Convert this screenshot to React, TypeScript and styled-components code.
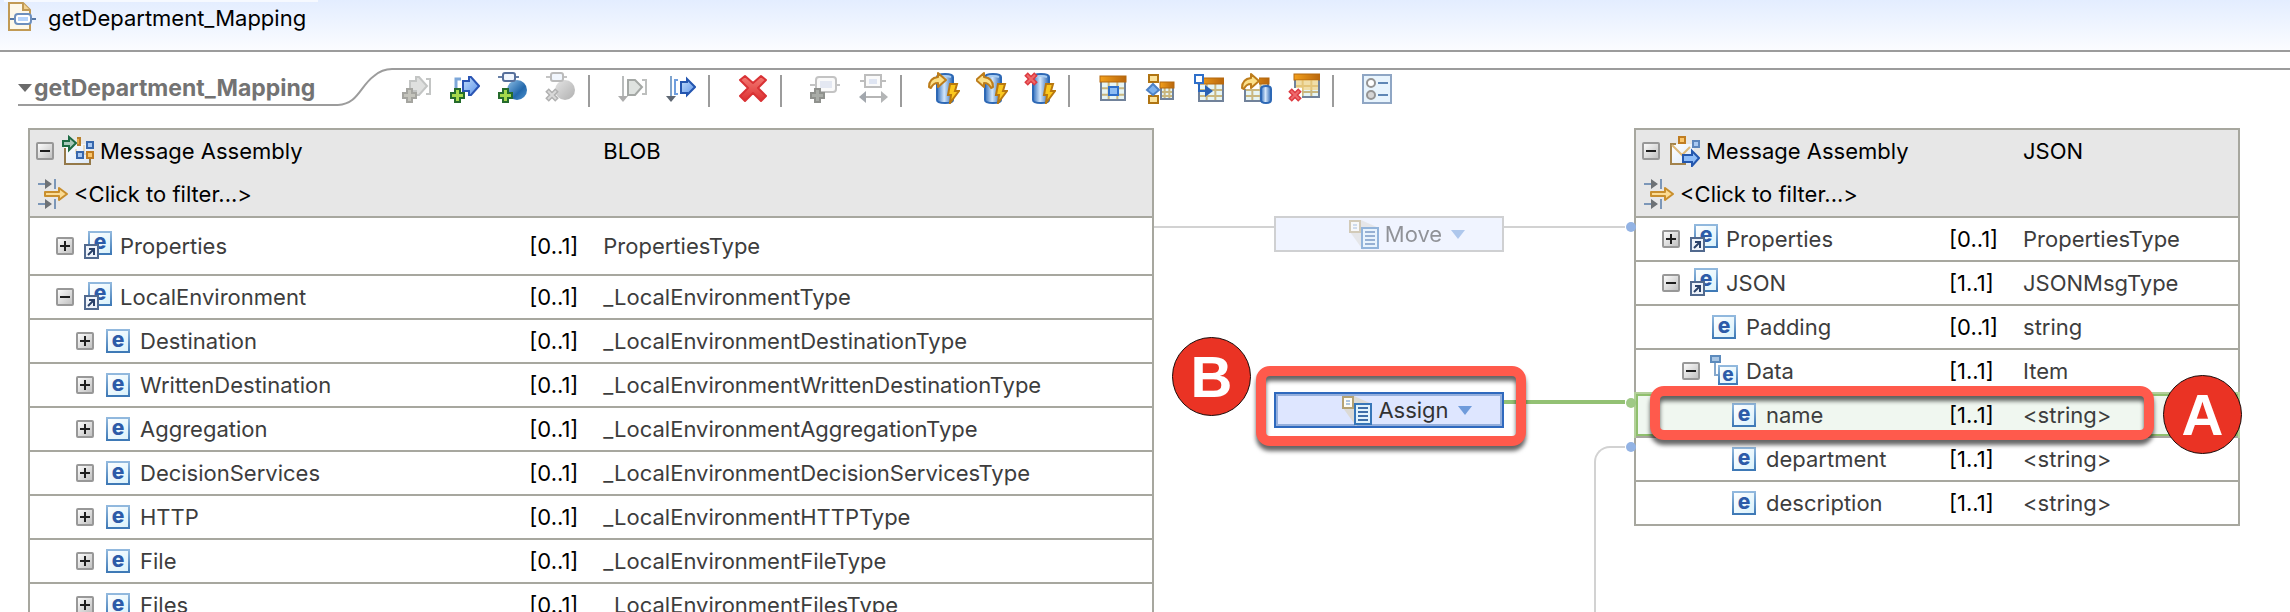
import React from "react";
import styled, { createGlobalStyle } from "styled-components";

const GlobalStyle = createGlobalStyle`
  *, *::before, *::after { box-sizing: border-box; }
  body {
    margin: 0;
    background: #ffffff;
    color: #000000;
    font-family: Inter, "Liberation Sans", sans-serif;
    font-size: 22px;
    line-height: 28px;
  }
  button {
    margin: 0;
    padding: 0;
    border: 0;
    background: none;
    font: inherit;
    color: inherit;
  }
`;

const line = "#a7a79f";

const Editor = styled.div`
  display: flex;
  flex-direction: column;
  height: 100vh;
  overflow: hidden;
`;

const TitleBar = styled.header`
  flex: none;
  padding: 0 4px;
  height: 52px;
  border-bottom: 2px solid #9c9c9c;
  background: linear-gradient(#e3edff, #fbfcff);
`;

const TitleTab = styled.h1`
  display: flex;
  align-items: center;
  gap: 12px;
  width: 314px;
  height: 34px;
  margin: 0;
  border-top: 2px solid #f6f9ff;
  font-size: 22px;
  font-weight: 400;
  white-space: nowrap;
`;

const Section = styled.div`
  display: flex;
  flex: none;
  height: 38px;
  margin: 16px 0 22px 18px;
`;

const SectionTitle = styled.button`
  display: flex;
  align-items: center;
  gap: 2px;
  width: 320px;
  padding-top: 4px;
  border-bottom: 2px solid #9c9c9c;
  color: #737373;
  font-size: 23px;
  font-weight: 700;
  white-space: nowrap;
`;

const Toolbar = styled.div`
  display: flex;
  flex: 1;
  align-items: flex-start;
  border-top: 2px solid #9c9c9c;
`;

const ToolButton = styled.button`
  display: flex;
  justify-content: center;
  width: 48px;
  padding-top: 2px;
`;

const ToolSeparator = styled.span`
  width: 2px;
  height: 32px;
  margin: 5px 18px 0 4px;
  background: #9c9c9c;
`;

const Canvas = styled.main`
  display: grid;
  flex: 1;
  grid-template-columns: 1126fr 480fr 606fr;
  align-items: start;
  min-height: 0;
  padding: 0 50px 0 28px;
`;

const Tree = styled.table`
  width: 100%;
  border: 2px solid ${line};
  border-spacing: 0;
  table-layout: fixed;
  text-align: left;
  white-space: nowrap;

  th, td { padding: 0 0 1px; font-weight: 400; }
  thead { background: #e7e7e7; }
  th { height: 43px; padding-bottom: 2px; }
`;

const NameCol = styled.col<{ $width: string }>`
  width: ${(p) => p.$width};
`;

const CardinalityCol = styled.col`
  width: 74px;
`;

const TreeRow = styled.tr<{ $tall?: boolean; $mapped?: boolean }>`
  position: relative;
  background: ${(p) => (p.$mapped ? "#f0f7f0" : "#ffffff")};

  td {
    height: ${(p) => (p.$tall ? 58 : 44)}px;
    border-top: 2px solid ${line};
    color: #3d3d3d;
  }
  td:nth-child(2) { color: #000000; }
`;

const RowName = styled.div<{ $level: number }>`
  display: flex;
  align-items: center;
  padding-left: ${(p) => 6 + p.$level * 20}px;
`;

const Label = styled.span`
  margin-left: 6px;
`;

const Toggle = styled.button`
  display: flex;
  width: 18px;
  height: 18px;
  margin-right: 8px;
`;

const ToggleSpace = styled.span`
  width: 26px;
`;

const FilterButton = styled.button`
  display: flex;
  align-items: center;
  margin-left: 6px;
`;

const MappedFrame = styled.span`
  position: absolute;
  inset: 0 -2px -2px;
  border: 2px solid #b4d09b;
  box-shadow: inset 0 0 0 2px #90c06e;
`;

const Callout = styled.span`
  position: absolute;
  z-index: 2;
  border: 10px solid #ff5a4c;
  border-radius: 14px;
  filter: drop-shadow(0 5px 2px rgba(0, 0, 0, 0.6));
  pointer-events: none;
`;

const NameCallout = styled(Callout)`
  inset: -6px 84px -4px 14px;
`;

const AssignCallout = styled(Callout)`
  inset: -26px -22px -18px -18px;
`;

const Badge = styled.span`
  position: absolute;
  z-index: 3;
  display: flex;
  align-items: center;
  justify-content: center;
  width: 79px;
  height: 79px;
  border: 1px solid #1a0a08;
  border-radius: 50%;
  background: #ea3324;
  color: #ffffff;
  font-family: "Liberation Sans", sans-serif;
  font-size: 58px;
  font-weight: 700;
`;

const NameBadge = styled(Badge)`
  top: -17px;
  right: -4px;
`;

const AssignBadge = styled(Badge)`
  top: -55px;
  left: -102px;
`;

const Mappings = styled.section`
  display: flex;
  flex-direction: column;
  align-self: stretch;
  padding-top: 88px;
`;

const MappingList = styled.div`
  display: flex;
  flex: none;
  flex-direction: column;
  gap: 140px;
`;

const MappingRow = styled.div`
  display: flex;
  height: 36px;
`;

const Wire = styled.span<{ $grow: number; $kind?: "active" | "none" }>`
  flex: ${(p) => p.$grow} 1 0;
  height: ${(p) => (p.$kind === "active" ? 4 : 2)}px;
  margin-top: ${(p) => (p.$kind === "active" ? 8 : 10)}px;
  background: ${(p) =>
    p.$kind === "active" ? "#93c174" : p.$kind === "none" ? "transparent" : "#d2d2d2"};
`;

const Port = styled.span<{ $active?: boolean }>`
  position: relative;
  z-index: 1;
  flex: none;
  width: 10px;
  height: 10px;
  margin: 6px -2px 0 1px;
  border-radius: 50%;
  background: ${(p) => (p.$active ? "#9fc986" : "#93b3e4")};
`;

const TransformNode = styled.div`
  position: relative;
  flex: 230 1 0;
  display: flex;
`;

const TransformButton = styled.button<{ $selected?: boolean }>`
  display: flex;
  flex: 1;
  align-items: center;
  justify-content: center;
  padding-left: 34px;
  border: 2px solid ${(p) => (p.$selected ? "#2f69be" : "#cfd0d2")};
  box-shadow: ${(p) => (p.$selected ? "inset 0 0 0 2px #95afdc" : "none")};
  background: ${(p) => (p.$selected ? "#dee6ff" : "#f0f4ff")};
  color: #333333;

  > * { opacity: ${(p) => (p.$selected ? 1 : 0.5)}; }
  > svg:last-child { margin-left: 9px; }
`;

const ElbowRow = styled.div`
  display: flex;
  flex: 1;
  justify-content: flex-end;
  margin-top: 12px;
`;

const Elbow = styled.span`
  width: 31px;
  margin-top: 6px;
  border: solid #d2d2d2;
  border-width: 2px 0 0 2px;
  border-top-left-radius: 16px;
`;

const ElbowPort = styled(Port)`
  margin-top: 2px;
`;

/* ---------- icons, all on a 32 × 32 grid ---------- */

const Svg = ({ children }: { children: React.ReactNode }) => (
  <svg width="32" height="32" viewBox="0 0 32 32" fill="none" aria-hidden="true">
    {children}
  </svg>
);

const DefsSvg = styled.svg`
  position: absolute;
`;

const Defs = () => (
  <DefsSvg width="0" height="0" aria-hidden="true">
    <defs>
      <linearGradient id="cyl" x1="0" x2="1" y1="0" y2="0">
        <stop offset="0" stopColor="#2f6dbd" />
        <stop offset="0.45" stopColor="#d3e6fa" />
        <stop offset="1" stopColor="#2a66b4" />
      </linearGradient>
      <linearGradient id="blue" x1="0" x2="1" y1="0" y2="1">
        <stop offset="0" stopColor="#c4defa" />
        <stop offset="1" stopColor="#5b93ea" />
      </linearGradient>
      <linearGradient id="ball" x1="0" x2="1" y1="0" y2="1">
        <stop offset="0" stopColor="#8fc1e8" />
        <stop offset="0.6" stopColor="#2368ab" />
        <stop offset="1" stopColor="#4f93cf" />
      </linearGradient>
      <linearGradient id="greyBall" x1="0" x2="1" y1="0" y2="1">
        <stop offset="0" stopColor="#e4e4e4" />
        <stop offset="1" stopColor="#b0b0b0" />
      </linearGradient>
      <linearGradient id="red" x1="0" x2="0" y1="0" y2="1">
        <stop offset="0" stopColor="#f47d76" />
        <stop offset="1" stopColor="#dc2f30" />
      </linearGradient>
      <linearGradient id="head" x1="0" x2="1" y1="0" y2="0">
        <stop offset="0" stopColor="#f3a01c" />
        <stop offset="1" stopColor="#b8660c" />
      </linearGradient>
      <linearGradient id="elem" x1="0" x2="1" y1="0" y2="1">
        <stop offset="0" stopColor="#ffffff" />
        <stop offset="1" stopColor="#d9f1fb" />
      </linearGradient>
      <linearGradient id="elemEdge" x1="0" x2="0" y1="0" y2="1">
        <stop offset="0" stopColor="#92b9de" />
        <stop offset="1" stopColor="#3e79b6" />
      </linearGradient>
      <linearGradient id="tog" x1="0" x2="1" y1="0" y2="1">
        <stop offset="0" stopColor="#ffffff" />
        <stop offset="1" stopColor="#bdbdbd" />
      </linearGradient>
      <linearGradient id="page" x1="0" x2="1" y1="0" y2="1">
        <stop offset="0" stopColor="#ffffff" />
        <stop offset="1" stopColor="#dbe8f8" />
      </linearGradient>
    </defs>
  </DefsSvg>
);

const Plus = ({ grey }: { grey?: boolean }) => (
  <path
    d="M7 17h5v4h4v5h-4v4H7v-4H3v-5h4z"
    fill={grey ? "#c4c4bc" : "#a6d84c"}
    stroke={grey ? "#a5a5a0" : "#256b2c"}
    strokeWidth="2"
  />
);

const SmallCross = ({ y, grey, x = 0 }: { y: number; grey?: boolean; x?: number }) => (
  <g transform={`translate(${x} ${y})`}>
    <path d="M2 2l10 10M12 2l-10 10" stroke={grey ? "#b0b0b0" : "#dd3a40"} strokeWidth="5" />
    <path d="M3 3l8 8M11 3l-8 8" stroke={grey ? "#d9d9d9" : "#ee6a6c"} strokeWidth="2" />
  </g>
);

const AddTarget = ({ grey }: { grey?: boolean }) => (
  <Svg>
    {grey ? (
      <>
        <path d="M10 9h6V5h3l8 9-8 9h-3v-4h-6z" fill="#dfe0df" stroke="#c3c5c4" strokeWidth="2" />
        <path d="M26 7h4v15h-4" stroke="#c3c5c4" strokeWidth="2" />
      </>
    ) : (
      <>
        <path d="M13 7H8v13" stroke="#7da7d9" strokeWidth="3" />
        <path d="M15 9h6V5h2l8 9-8 9h-2v-4h-6z" fill="url(#blue)" stroke="#2b55b4" strokeWidth="2" />
      </>
    )}
    <Plus grey={grey} />
  </Svg>
);

const NodeBall = ({ grey }: { grey?: boolean }) => (
  <Svg>
    <circle cx="21" cy="18" r="10" fill={grey ? "url(#greyBall)" : "url(#ball)"} />
    <path d="M2 5h5M19 5h4" stroke={grey ? "#c4c4c4" : "#6880a6"} strokeWidth="2" />
    <rect x="7" y="1" width="12" height="8" rx="2" fill="#f1f6fd" stroke={grey ? "#bbbbbb" : "#566f9b"} strokeWidth="2" />
    {grey ? <SmallCross x={1} y={16} grey /> : <Plus />}
  </Svg>
);

const MoveDown = ({ grey }: { grey?: boolean }) => (
  <Svg>
    <path d="M7 4v21" stroke={grey ? "#b9bcbc" : "#7fa3cc"} strokeWidth="2" />
    <path d="M2 24h10l-5 6z" fill={grey ? "#adadad" : "#5f6772"} />
    {grey ? (
      <>
        <path d="M12 8h7l7 7-7 8h-7z" fill="#dfe3e0" stroke="#a4a8a5" strokeWidth="2" />
        <path d="M26 8h4v14h-4" stroke="#bdbfbe" strokeWidth="2" />
      </>
    ) : (
      <>
        <path d="M14 8h-3v14h3" stroke="#6f9ede" strokeWidth="2" />
        <path d="M17 10h6V7l8 8-8 8v-2h-6z" fill="url(#blue)" stroke="#2456b0" strokeWidth="2" />
      </>
    )}
  </Svg>
);

const DeleteIcon = () => (
  <Svg>
    <path
      d="M9 4l8 7 8-7 5 4-8 8 8 8-5 5-8-8-8 8-5-5 8-8-8-8z"
      fill="url(#red)"
      stroke="#d93235"
      strokeWidth="2"
      strokeLinejoin="round"
    />
  </Svg>
);

const AddNode = () => (
  <Svg>
    <rect x="8" y="5" width="20" height="15" rx="3" fill="#fafafa" stroke="#c3c3c3" strokeWidth="2" />
    <path d="M2 13h5M29 13h3" stroke="#c3c3c3" strokeWidth="2" />
    <path d="M12 9h12v7H12z" fill="#e4e8f2" />
    <path d="M7 17h5v4h4v5h-4v4H7v-4H3v-5h4z" fill="#a9aca7" stroke="#8f918d" strokeWidth="2" />
  </Svg>
);

const FitNode = () => (
  <Svg>
    <rect x="9" y="3" width="16" height="12" fill="#fafafa" stroke="#bdbdbd" strokeWidth="2" />
    <path d="M4 9h4M26 9h4" stroke="#bdbdbd" strokeWidth="2" />
    <path d="M13 7h8v5h-8z" fill="#dfe5f2" />
    <path d="M8 25h18" stroke="#b5b5b5" strokeWidth="2" />
    <path d="M3 25l7-6v12z" fill="#a2a7ad" />
    <path d="M32 25l-7-6v12z" fill="#b3b5b6" />
  </Svg>
);

const Cylinder = () => (
  <>
    <path d="M9 5q0-3 8-3t8 3v23q0 3-8 3t-8-3z" fill="url(#cyl)" stroke="#2d68b5" strokeWidth="2" />
    <path d="M11 5q6-2 12 0" stroke="#a8cdf2" strokeWidth="2" />
    <path d="M22 12h7l-2 7h4l-9 12 1-8h-3z" fill="#fbc81e" stroke="#b9780e" strokeWidth="2" />
  </>
);

const CurvedArrow = () => (
  <path
    d="M1 15q0-9 9-10V1l8 7-8 7v-4q-5 0-7 5z"
    fill="#fbe08a"
    stroke="#bd7d1b"
    strokeWidth="2"
    strokeLinejoin="round"
  />
);

const Database = ({ kind }: { kind: "in" | "out" | "delete" }) => (
  <Svg>
    <Cylinder />
    {kind === "in" && <CurvedArrow />}
    {kind === "out" && (
      <g transform="translate(18 0) scale(-1 1)">
        <CurvedArrow />
      </g>
    )}
    {kind === "delete" && <SmallCross y={0} />}
  </Svg>
);

const Grid = ({ x, y, w, h }: { x: number; y: number; w: number; h: number }) => {
  const cw = w / 3;
  const body = h - 6;
  const rh = body / 3;
  return (
    <g transform={`translate(${x} ${y})`}>
      <rect y="5" width={w} height={h - 5} fill="#e6f5f5" />
      <path
        d={`M0 ${6 + rh}h${w}M0 ${6 + rh * 2}h${w}M${cw} 6v${body}M${cw * 2} 6v${body}`}
        stroke="#c9b77f"
        strokeWidth="2"
      />
      <path d={`M1 6v${h - 7}h${w - 2}V6`} stroke="#71829a" strokeWidth="2" />
      <rect x="0" y="0" width={w} height="6" fill="url(#head)" stroke="#b4690f" />
    </g>
  );
};

const TableCell = () => (
  <Svg>
    <Grid x={4} y={4} w={26} h={25} />
    <rect x="13" y="15" width="9" height="8" fill="#8cbcf3" stroke="#2e6fca" strokeWidth="2" />
  </Svg>
);

const TableTree = () => (
  <Svg>
    <rect x="5" y="3" width="9" height="7" fill="#fbe29a" stroke="#b07412" strokeWidth="2" />
    <rect x="5" y="24" width="9" height="7" fill="#fbe29a" stroke="#b07412" strokeWidth="2" />
    <path d="M9 12l6 6-6 5-6-5z" fill="#7db1ee" stroke="#4c81c6" strokeWidth="2" />
    <Grid x={16} y={10} w={14} h={18} />
  </Svg>
);

const TableLink = () => (
  <Svg>
    <Grid x={6} y={6} w={26} h={24} />
    <rect x="3" y="3" width="8" height="8" fill="#ffffff" stroke="#2e6fca" strokeWidth="2" />
    <path d="M7 12v7h8" stroke="#2a67bf" strokeWidth="2" />
    <path d="M13 13l8 6-8 6z" fill="#2a62b4" />
  </Svg>
);

const TableStore = () => (
  <Svg>
    <Grid x={4} y={6} w={25} h={24} />
    <path d="M1 4h18v13H1z" fill="#ffffff" />
    <g transform="translate(1 1)">
      <CurvedArrow />
    </g>
    <path d="M21 17q0-3 5-3t5 3v11q0 3-5 3t-5-3z" fill="url(#cyl)" stroke="#2d68b5" strokeWidth="2" />
  </Svg>
);

const TableDelete = () => (
  <Svg>
    <Grid x={6} y={2} w={26} h={24} />
    <path d="M8 8h22v10H8z" fill="#f6cf77" fillOpacity="0.6" />
    <path d="M0 16h14v14H0z" fill="#ffffff" />
    <SmallCross y={16} />
  </Svg>
);

const PropertiesIcon = () => (
  <Svg>
    <rect x="3" y="3" width="28" height="28" fill="#e8f4fd" stroke="#8fa6c4" strokeWidth="2" />
    <circle cx="11" cy="11" r="4" fill="#ffffff" stroke="#949494" strokeWidth="2" />
    <circle cx="11" cy="23" r="4" fill="#d5d5d5" stroke="#949494" strokeWidth="2" />
    <path d="M18 11h10M18 23h10" stroke="#5f87b5" strokeWidth="2" />
  </Svg>
);

const MapFileIcon = () => (
  <Svg>
    <path d="M5 1h14l7 7v20H5z" fill="#fdf8ea" stroke="#c19a55" strokeWidth="2" />
    <path d="M19 1v7h7" fill="#f3d493" stroke="#c19a55" strokeWidth="2" />
    <path d="M6 17h5M27 17h5" stroke="#5677a5" strokeWidth="2" />
    <rect x="11" y="12" width="16" height="10" rx="3" fill="#ffffff" stroke="#6d8fbd" strokeWidth="2" />
    <rect x="14" y="15" width="10" height="4" fill="#b5d3fa" />
  </Svg>
);

const ElementBox = ({ x, y, size }: { x: number; y: number; size: number }) => (
  <>
    <rect x={x + 1} y={y + 1} width={size - 2} height={size - 2} fill="url(#elem)" stroke="url(#elemEdge)" strokeWidth="2" />
    <text
      x={x + size / 2}
      y={y + size / 2 + 6}
      fontFamily="Inter, sans-serif"
      fontSize={size > 20 ? 21 : 19}
      fontWeight="800"
      textAnchor="middle"
      fill="#2c5ba8"
    >
      e
    </text>
  </>
);

const ElementIcon = () => (
  <Svg>
    <ElementBox x={4} y={4} size={24} />
  </Svg>
);

const ElementRefIcon = () => (
  <Svg>
    <ElementBox x={6} y={1} size={24} />
    <rect x="3" y="15" width="13" height="13" fill="#eef3fa" stroke="#51698e" strokeWidth="2" />
    <path d="M6 25l6-6M7 19h5v6" stroke="#2b426a" strokeWidth="2" />
  </Svg>
);

const ElementChildIcon = () => (
  <Svg>
    <path d="M7 7v13h4" stroke="#86a8cc" strokeWidth="2" />
    <rect x="3" y="1" width="9" height="6" fill="#a9c6e4" stroke="#5c8bbd" strokeWidth="2" />
    <ElementBox x={10} y={10} size={20} />
  </Svg>
);

const SourceIcon = () => (
  <Svg>
    <path d="M2 9h26v20H2z" fill="url(#page)" />
    <path d="M3 13v16h25v-5" stroke="#94794a" strokeWidth="2" />
    <path d="M14 14v5h10M22 10v8" stroke="#dfc089" strokeWidth="1" />
    <path d="M15 3h3v7h-3" fill="#e7ad4d" stroke="#b8802c" strokeWidth="2" />
    <path d="M1 6h6V2l7 6-7 7v-4H1z" fill="#a9c9bb" stroke="#1d6b44" strokeWidth="2" />
    <rect x="25" y="7" width="6" height="6" fill="#a9c9f3" stroke="#3767ad" strokeWidth="2" />
    <rect x="15" y="17" width="6" height="6" fill="#a9c9f3" stroke="#3767ad" strokeWidth="2" />
    <rect x="25" y="17" width="6" height="6" fill="#fbc66a" stroke="#c07d22" strokeWidth="2" />
  </Svg>
);

const TargetIcon = () => (
  <Svg>
    <path d="M3 9h23v20H3z" fill="url(#page)" />
    <path d="M8 9H3v20h15" stroke="#a3834c" strokeWidth="2" />
    <path d="M4 10l10 10 8-8" stroke="#ddb877" strokeWidth="2" />
    <rect x="11" y="2" width="6" height="6" fill="#fbc66a" stroke="#c07d22" strokeWidth="2" />
    <rect x="25" y="6" width="6" height="6" fill="#a9c9f3" stroke="#5d86bd" strokeWidth="2" />
    <path d="M15 20h9v-4l7 7-7 8v-4h-9z" fill="#8fbdf8" stroke="#2457ae" strokeWidth="2" />
  </Svg>
);

const FilterIcon = () => (
  <Svg>
    <path d="M2 6h8M2 26h8" stroke="#7c97b8" strokeWidth="2" />
    <path d="M9 1l7 5-7 5zM9 21l7 5-7 5z" fill="#6e7276" />
    <path d="M19 1v10M19 21v10" stroke="#7c97b8" strokeWidth="2" />
    <path d="M9 14h14v-4l8 6-8 6v-4H9z" fill="#fbdc94" stroke="#c98f2d" strokeWidth="2" strokeLinejoin="round" />
  </Svg>
);

const TransformIcon = () => (
  <Svg>
    <path d="M14 2l18 8-16 22L3 14z" fill="#dcdad5" />
    <rect x="3" y="3" width="10" height="11" fill="#fffdf6" stroke="#b5a274" strokeWidth="2" />
    <path d="M6 7h4M6 10h4" stroke="#5f8cc5" strokeWidth="1" />
    <rect x="15" y="10" width="16" height="20" fill="#e2f3fc" stroke="#3776b8" strokeWidth="2" />
    <path d="M18 14h10M18 18h10M18 22h10M18 26h10" stroke="#3f6fa8" strokeWidth="2" />
  </Svg>
);

const Caret = () => (
  <svg width="14" height="9" viewBox="0 0 14 9" aria-hidden="true">
    <path d="M0 0h14L7 9z" fill="#6f9bdb" />
  </svg>
);

const Twistie = () => (
  <svg width="14" height="8" viewBox="0 0 14 8" aria-hidden="true">
    <path d="M0 0h14L7 8z" fill="#6b6b6b" />
  </svg>
);

const ToggleBox = ({ open }: { open: boolean }) => (
  <svg width="18" height="18" viewBox="0 0 18 18" fill="none" aria-hidden="true">
    <rect x="1" y="1" width="16" height="16" rx="1" fill="url(#tog)" stroke="#989898" strokeWidth="2" />
    <path d={open ? "M4 9h10" : "M4 9h10M9 4v10"} stroke="#1e1e1e" strokeWidth="2" />
  </svg>
);

/* ---------- data ---------- */

type Node = {
  name: string;
  level: number;
  icon: "ref" | "element" | "child";
  toggle?: "open" | "closed";
  cardinality: string;
  type: string;
  tall?: boolean;
  mapped?: boolean;
};

const icons = { ref: ElementRefIcon, element: ElementIcon, child: ElementChildIcon };

const env = (name: string): Node => ({
  name,
  level: 2,
  icon: "element",
  toggle: "closed",
  cardinality: "[0..1]",
  type: `_LocalEnvironment${name}Type`,
});

const source: Node[] = [
  { name: "Properties", level: 1, icon: "ref", toggle: "closed", cardinality: "[0..1]", type: "PropertiesType", tall: true },
  { name: "LocalEnvironment", level: 1, icon: "ref", toggle: "open", cardinality: "[0..1]", type: "_LocalEnvironmentType" },
  ...["Destination", "WrittenDestination", "Aggregation", "DecisionServices", "HTTP", "File", "Files"].map(env),
];

const target: Node[] = [
  { name: "Properties", level: 1, icon: "ref", toggle: "closed", cardinality: "[0..1]", type: "PropertiesType" },
  { name: "JSON", level: 1, icon: "ref", toggle: "open", cardinality: "[1..1]", type: "JSONMsgType" },
  { name: "Padding", level: 2, icon: "element", cardinality: "[0..1]", type: "string" },
  { name: "Data", level: 2, icon: "child", toggle: "open", cardinality: "[1..1]", type: "Item" },
  { name: "name", level: 3, icon: "element", cardinality: "[1..1]", type: "<string>", mapped: true },
  { name: "department", level: 3, icon: "element", cardinality: "[1..1]", type: "<string>" },
  { name: "description", level: 3, icon: "element", cardinality: "[1..1]", type: "<string>" },
];

const tools: ({ label: string; icon: React.ReactNode; disabled?: boolean } | null)[] = [
  { label: "Add input", icon: <AddTarget grey />, disabled: true },
  { label: "Add output", icon: <AddTarget /> },
  { label: "Add mapping", icon: <NodeBall /> },
  { label: "Remove mapping", icon: <NodeBall grey />, disabled: true },
  null,
  { label: "Move input", icon: <MoveDown grey />, disabled: true },
  { label: "Move output", icon: <MoveDown /> },
  null,
  { label: "Delete", icon: <DeleteIcon /> },
  null,
  { label: "Add transform", icon: <AddNode />, disabled: true },
  { label: "Fit transform", icon: <FitNode />, disabled: true },
  null,
  { label: "Select from database", icon: <Database kind="in" /> },
  { label: "Insert into database", icon: <Database kind="out" /> },
  { label: "Delete from database", icon: <Database kind="delete" /> },
  null,
  { label: "Show cell", icon: <TableCell /> },
  { label: "Show tree", icon: <TableTree /> },
  { label: "Link table", icon: <TableLink /> },
  { label: "Store table", icon: <TableStore /> },
  { label: "Delete table", icon: <TableDelete /> },
  null,
  { label: "Properties", icon: <PropertiesIcon /> },
];

const MessageTree = ({
  icon,
  domain,
  nodes,
  nameWidth,
}: {
  icon: React.ReactNode;
  domain: string;
  nodes: Node[];
  nameWidth: string;
}) => (
  <Tree>
    <colgroup>
      <NameCol $width={nameWidth} />
      <CardinalityCol />
      <col />
    </colgroup>
    <thead>
      <tr>
        <th scope="col" colSpan={2}>
          <RowName $level={0}>
            <Toggle aria-label="Collapse Message Assembly">
              <ToggleBox open />
            </Toggle>
            {icon}
            <Label>Message Assembly</Label>
          </RowName>
        </th>
        <th scope="col">{domain}</th>
      </tr>
      <tr>
        <th colSpan={3}>
          <FilterButton>
            <FilterIcon />
            <Label>&lt;Click to filter...&gt;</Label>
          </FilterButton>
        </th>
      </tr>
    </thead>
    <tbody>
      {nodes.map((node) => {
        const Icon = icons[node.icon];
        return (
          <TreeRow key={node.name} $tall={node.tall} $mapped={node.mapped}>
            <td>
              {node.mapped && (
                <>
                  <MappedFrame />
                  <NameCallout />
                  <NameBadge>A</NameBadge>
                </>
              )}
              <RowName $level={node.level}>
                {node.toggle ? (
                  <Toggle aria-label={`Toggle ${node.name}`}>
                    <ToggleBox open={node.toggle === "open"} />
                  </Toggle>
                ) : (
                  <ToggleSpace />
                )}
                <Icon />
                <Label>{node.name}</Label>
              </RowName>
            </td>
            <td>{node.cardinality}</td>
            <td>{node.type}</td>
          </TreeRow>
        );
      })}
    </tbody>
  </Tree>
);

export default function App() {
  return (
    <Editor>
      <GlobalStyle />
      <Defs />
      <TitleBar>
        <TitleTab>
          <MapFileIcon />
          getDepartment_Mapping
        </TitleTab>
      </TitleBar>
      <Section>
        <SectionTitle>
          <Twistie />
          getDepartment_Mapping
        </SectionTitle>
        <svg width="54" height="38" viewBox="0 0 54 38" fill="none" aria-hidden="true">
          <path d="M0 37C20 36 22 18 36 8Q44 1 54 1" stroke="#9c9c9c" strokeWidth="2" />
        </svg>
        <Toolbar role="toolbar">
          {tools.map((tool, i) =>
            tool ? (
              <ToolButton key={i} aria-label={tool.label} disabled={tool.disabled}>
                {tool.icon}
              </ToolButton>
            ) : (
              <ToolSeparator key={i} />
            )
          )}
        </Toolbar>
      </Section>
      <Canvas>
        <MessageTree icon={<SourceIcon />} domain="BLOB" nodes={source} nameWidth="44.5%" />
        <Mappings>
          <MappingList>
            <MappingRow>
              <Wire $grow={120} />
              <TransformNode>
                <TransformButton>
                  <TransformIcon />
                  <Label>Move</Label>
                  <Caret />
                </TransformButton>
              </TransformNode>
              <Wire $grow={121} />
              <Port />
            </MappingRow>
            <MappingRow>
              <Wire $grow={120} $kind="none" />
              <TransformNode>
                <TransformButton $selected>
                  <TransformIcon />
                  <Label>Assign</Label>
                  <Caret />
                </TransformButton>
                <AssignCallout />
                <AssignBadge>B</AssignBadge>
              </TransformNode>
              <Wire $grow={121} $kind="active" />
              <Port $active />
            </MappingRow>
          </MappingList>
          <ElbowRow>
            <Elbow />
            <ElbowPort />
          </ElbowRow>
        </Mappings>
        <MessageTree icon={<TargetIcon />} domain="JSON" nodes={target} nameWidth="52%" />
      </Canvas>
    </Editor>
  );
}
